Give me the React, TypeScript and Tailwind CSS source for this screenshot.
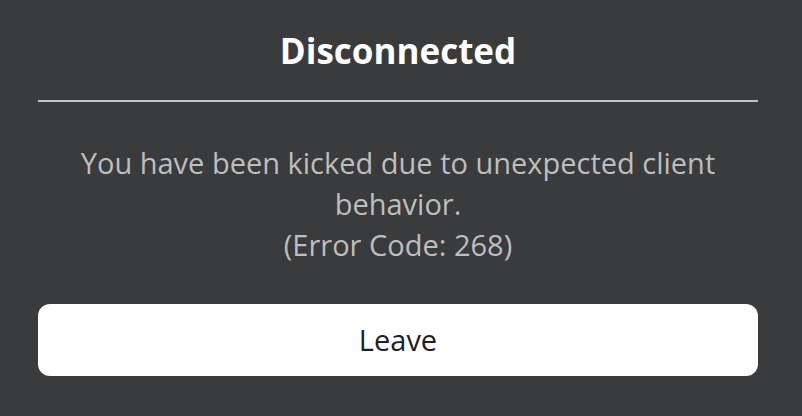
export default function App() {
  return (
    <div
      className="w-[802px] h-[416px] bg-[#393b3d] pl-[38px] pr-[44px] flex flex-col"
      style={{ fontFamily: '"Open Sans", "Noto Sans", sans-serif' }}
    >
      <div className="h-[100px] flex items-center justify-center text-white font-bold text-[35px] leading-none">
        Disconnected
      </div>
      <div className="h-[2px] bg-[#c4c4c4]" />
      <div className="pt-[40px] text-center text-[#bdbebe] text-[29px] leading-[41px] px-[20px]">
        You have been kicked due to unexpected client behavior.
        <br />
        (Error Code: 268)
      </div>
      <button className="mt-[39px] h-[72px] w-full bg-white rounded-[12px] text-[#1f2022] text-[29px]">
        Leave
      </button>
    </div>
  );
}
